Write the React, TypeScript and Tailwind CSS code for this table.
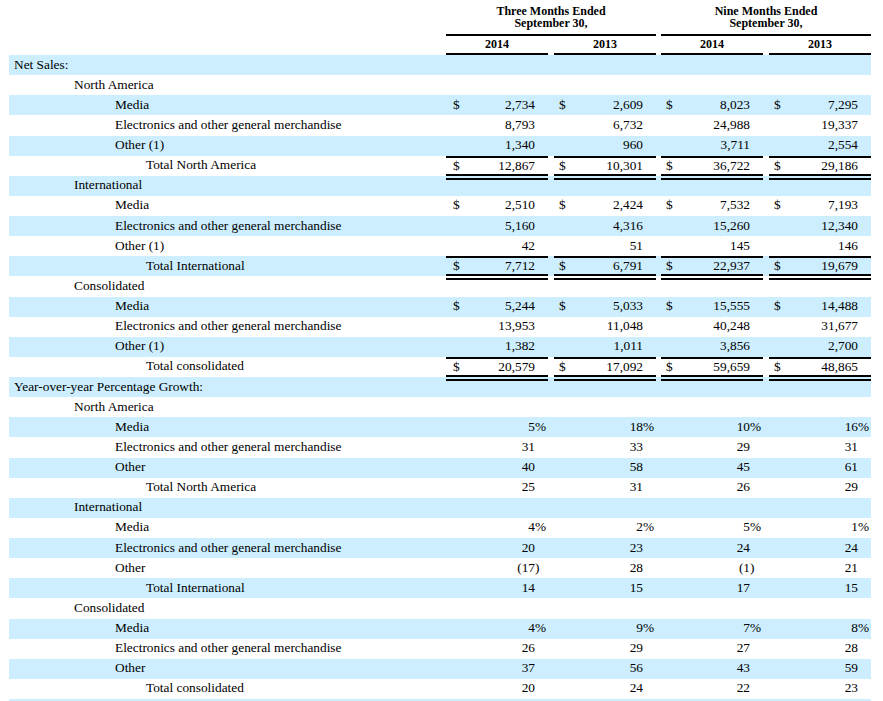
type Level = 0 | 1 | 2 | 3;

type Row = {
  label: string;
  level: Level;
  values?: string[];
  dollar?: boolean;
  total?: boolean;
};

const gridCols =
  "grid w-[862px] grid-cols-[437px_102px_6px_102px_5px_102px_6px_102px]";

const indent: Record<Level, string> = {
  0: "pl-[5px]",
  1: "pl-[65px]",
  2: "pl-[106px]",
  3: "pl-[137px]",
};

const ELEC = "Electronics and other general merchandise";

const rows: Row[] = [
  { label: "Net Sales:", level: 0 },
  { label: "North America", level: 1 },
  { label: "Media", level: 2, values: ["2,734", "2,609", "8,023", "7,295"], dollar: true },
  { label: ELEC, level: 2, values: ["8,793", "6,732", "24,988", "19,337"] },
  { label: "Other (1)", level: 2, values: ["1,340", "960", "3,711", "2,554"] },
  { label: "Total North America", level: 3, values: ["12,867", "10,301", "36,722", "29,186"], dollar: true, total: true },
  { label: "International", level: 1 },
  { label: "Media", level: 2, values: ["2,510", "2,424", "7,532", "7,193"], dollar: true },
  { label: ELEC, level: 2, values: ["5,160", "4,316", "15,260", "12,340"] },
  { label: "Other (1)", level: 2, values: ["42", "51", "145", "146"] },
  { label: "Total International", level: 3, values: ["7,712", "6,791", "22,937", "19,679"], dollar: true, total: true },
  { label: "Consolidated", level: 1 },
  { label: "Media", level: 2, values: ["5,244", "5,033", "15,555", "14,488"], dollar: true },
  { label: ELEC, level: 2, values: ["13,953", "11,048", "40,248", "31,677"] },
  { label: "Other (1)", level: 2, values: ["1,382", "1,011", "3,856", "2,700"] },
  { label: "Total consolidated", level: 3, values: ["20,579", "17,092", "59,659", "48,865"], dollar: true, total: true },
  { label: "Year-over-year Percentage Growth:", level: 0 },
  { label: "North America", level: 1 },
  { label: "Media", level: 2, values: ["5%", "18%", "10%", "16%"] },
  { label: ELEC, level: 2, values: ["31", "33", "29", "31"] },
  { label: "Other", level: 2, values: ["40", "58", "45", "61"] },
  { label: "Total North America", level: 3, values: ["25", "31", "26", "29"] },
  { label: "International", level: 1 },
  { label: "Media", level: 2, values: ["4%", "2%", "5%", "1%"] },
  { label: ELEC, level: 2, values: ["20", "23", "24", "24"] },
  { label: "Other", level: 2, values: ["(17)", "28", "(1)", "21"] },
  { label: "Total International", level: 3, values: ["14", "15", "17", "15"] },
  { label: "Consolidated", level: 1 },
  { label: "Media", level: 2, values: ["4%", "9%", "7%", "8%"] },
  { label: ELEC, level: 2, values: ["26", "29", "27", "28"] },
  { label: "Other", level: 2, values: ["37", "56", "43", "59"] },
  { label: "Total consolidated", level: 3, values: ["20", "24", "22", "23"] },
  { label: "", level: 0 },
];

function Amount({
  value,
  dollar,
  total,
  first,
}: {
  value: string;
  dollar?: boolean;
  total?: boolean;
  first?: boolean;
}) {
  // % and ) hang into the right padding, like the printed filing
  const hangs = /[%)]$/.test(value);
  const main = hangs ? value.slice(0, -1) : value;
  const suffix = hangs ? value.slice(-1) : "";

  return (
    <div
      className={`box-border flex items-center ${
        total
          ? "h-[24px] self-start border-t-2 border-b-[6px] border-black pb-[1px] [border-bottom-style:double]"
          : "h-full pb-[2px]"
      }`}
    >
      <span className={`${first ? "pl-[7px]" : "pl-[5px]"} w-[18px]`}>
        {dollar ? "$" : ""}
      </span>
      <span className="flex-1 text-right">{main}</span>
      <span className="w-[13px]">{suffix}</span>
    </div>
  );
}

export default function App() {
  return (
    <div className="min-h-screen bg-white pl-[9px] font-['Liberation_Serif',serif] text-black">
      {/* Column headings */}
      <div className={`${gridCols} text-[12px] font-bold`}>
        <div />
        <div className="col-span-3 box-border h-[36px] border-b-2 border-black pt-[6px] text-center leading-[11.5px]">
          Three Months Ended
          <br />
          September 30,
        </div>
        <div />
        <div className="col-span-3 box-border h-[36px] border-b-2 border-black pt-[6px] text-center leading-[11.5px]">
          Nine Months Ended
          <br />
          September 30,
        </div>
      </div>
      <div className={`${gridCols} text-[12px] font-bold`}>
        <div />
        {["2014", "", "2013", "", "2014", "", "2013"].map((year, i) =>
          year ? (
            <div
              key={i}
              className="box-border flex h-[19px] items-center justify-center border-b-2 border-black pb-[2px]"
            >
              {year}
            </div>
          ) : (
            <div key={i} />
          ),
        )}
      </div>

      {/* Body */}
      <div className="text-[13.33px] leading-[15px]">
        {rows.map((row, r) => (
          <div
            key={r}
            className={`${gridCols} h-[20.125px] grid-rows-[20.125px] ${
              r % 2 === 0 ? "bg-[#cceeff]" : "bg-white"
            } ${row.total ? "relative z-10" : ""}`}
          >
            <div
              className={`flex h-full items-center whitespace-nowrap pb-[2px] ${indent[row.level]}`}
            >
              {row.label}
            </div>
            {row.values
              ? row.values.flatMap((v, i) => {
                  const cell = (
                    <Amount
                      key={`v${i}`}
                      value={v}
                      dollar={row.dollar}
                      total={row.total}
                      first={i === 0}
                    />
                  );
                  return i < 3 ? [cell, <div key={`g${i}`} />] : [cell];
                })
              : null}
          </div>
        ))}
      </div>
    </div>
  );
}
